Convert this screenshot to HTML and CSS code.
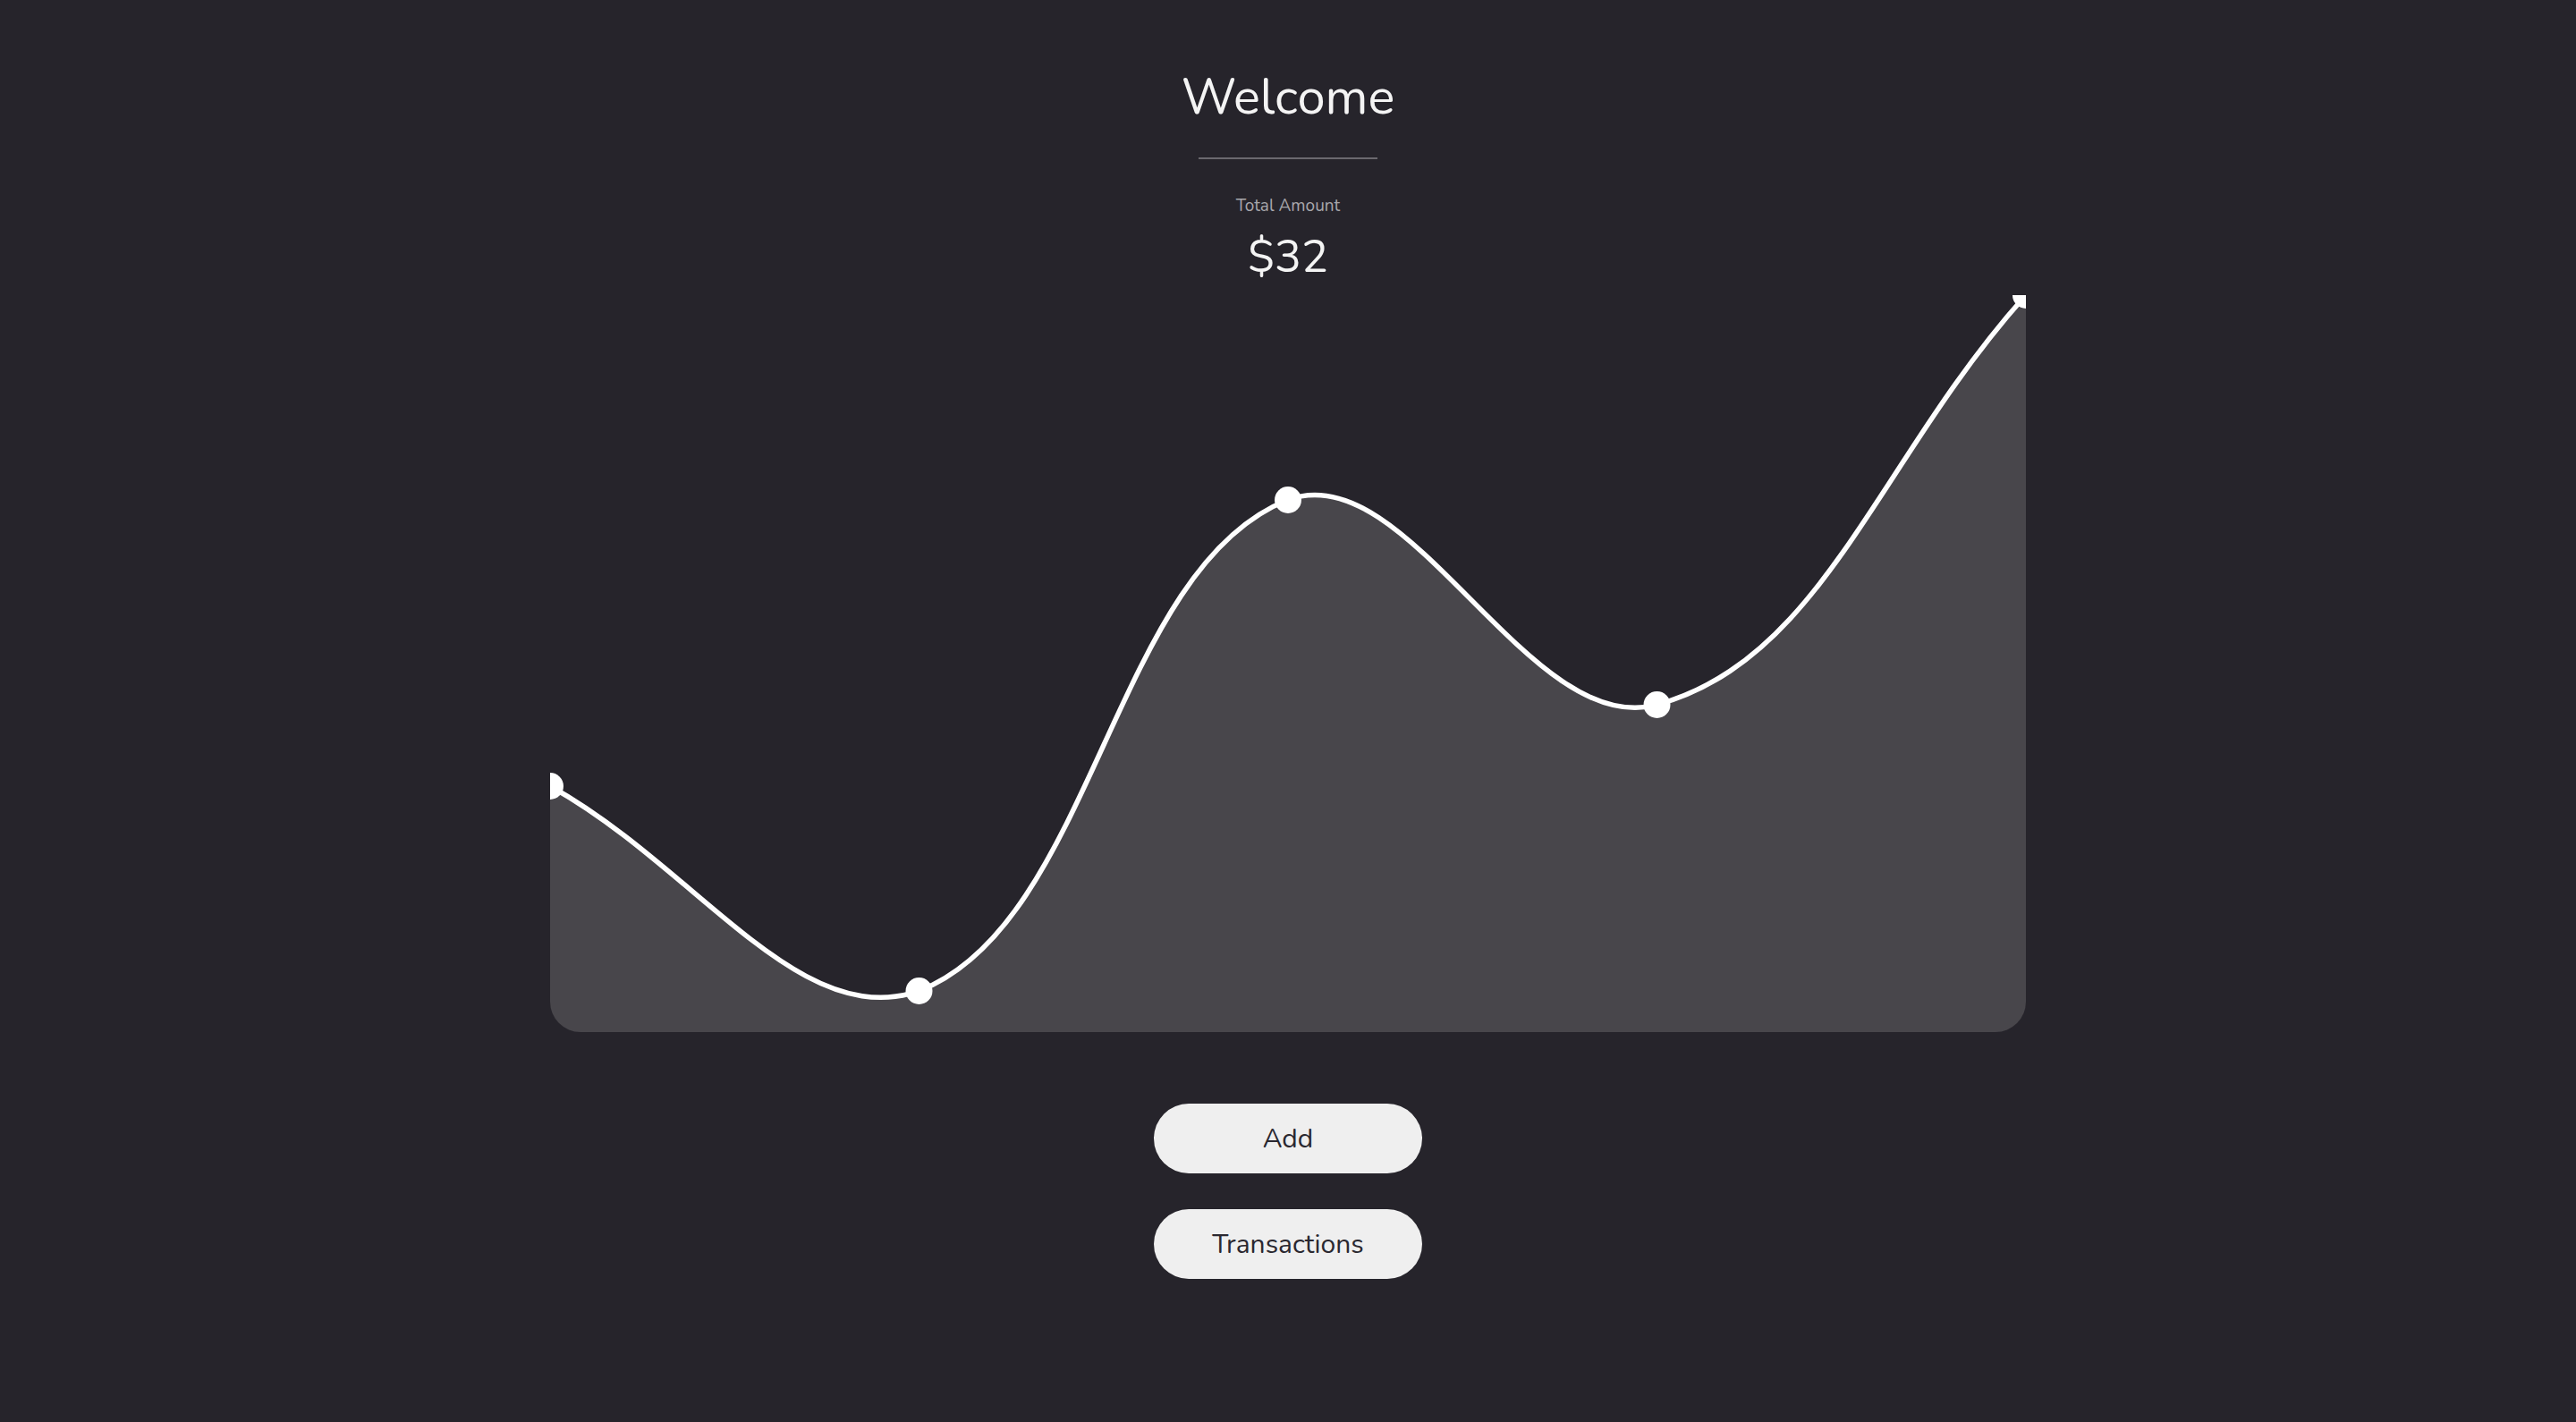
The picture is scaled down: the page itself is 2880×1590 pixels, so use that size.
FILE: index.html
```html
<!DOCTYPE html>
<html>
    <head>
        <title>Wallet</title>
        <link rel="stylesheet" href="styles.css">
    </head>
    <body>
        <div class="page">
            <h1 class="title">Welcome</h1>
            <div class="divider"></div>
            <div class="total_label">Total Amount</div>
            <div class="total_value">$32</div>

            <div class="chart">
                <svg class="chart_svg" viewBox="0 0 1650 824" width="1650" height="824">
                    <path class="chart_fill" d="M0,549 C165,640.6 278.1,824 412.5,778 C608.1,702.1 629.4,304.9 825,229 C959.4,176.9 1094.4,497.7 1237.5,458 C1424.4,406.1 1485,183.2 1650,0 L1650,824 L0,824 Z"/>
                    <path class="chart_line" d="M0,549 C165,640.6 278.1,824 412.5,778 C608.1,702.1 629.4,304.9 825,229 C959.4,176.9 1094.4,497.7 1237.5,458 C1424.4,406.1 1485,183.2 1650,0"/>
                    <circle class="chart_dot" cx="0" cy="549" r="15"/>
                    <circle class="chart_dot" cx="412.5" cy="778" r="15"/>
                    <circle class="chart_dot" cx="825" cy="229" r="15"/>
                    <circle class="chart_dot" cx="1237.5" cy="458" r="15"/>
                    <circle class="chart_dot" cx="1650" cy="0" r="15"/>
                </svg>
            </div>

            <div class="buttons">
                <button class="pill_button">Add</button>
                <button class="pill_button">Transactions</button>
            </div>
        </div>
    </body>
</html>
```

FILE: styles.css
```css
html, body {
    margin: 0;
    height: 100%;
}
body {
    background-color: #26242b;
    color: #f2f2f2;
    font-family: "Nunito", "Noto Sans", "Open Sans", sans-serif;
}
.page {
    display: flex;
    flex-direction: column;
    align-items: center;
    padding-top: 77px;
}
.title {
    font-size: 56px;
    font-weight: 400;
    line-height: 64px;
    margin: 0;
    color: #f4f4f4;
}
.divider {
    width: 200px;
    height: 2px;
    background-color: #6a686e;
    margin: 35px 0 0 0;
}
.total_label {
    font-size: 19px;
    line-height: 24px;
    color: #a8a7ab;
    margin-top: 40px;
}
.total_value {
    font-size: 50px;
    line-height: 60px;
    color: #f4f4f4;
    margin-top: 16px;
}

.chart {
    width: 1650px;
    height: 824px;
    margin-top: 12px;
    border-radius: 0 0 34px 34px;
    overflow: hidden;
}
.chart_svg {
    display: block;
}
.chart_fill {
    fill: #48464b;
}
.chart_line {
    fill: none;
    stroke: #ffffff;
    stroke-width: 5.5;
}
.chart_dot {
    fill: #ffffff;
}

.buttons {
    display: flex;
    flex-direction: column;
    gap: 40px;
    margin-top: 80px;
}
.pill_button {
    width: 300px;
    height: 78px;
    border: none;
    border-radius: 39px;
    background-color: #efefef;
    color: #2a2830;
    font-family: inherit;
    font-size: 30px;
    cursor: pointer;
}
```
